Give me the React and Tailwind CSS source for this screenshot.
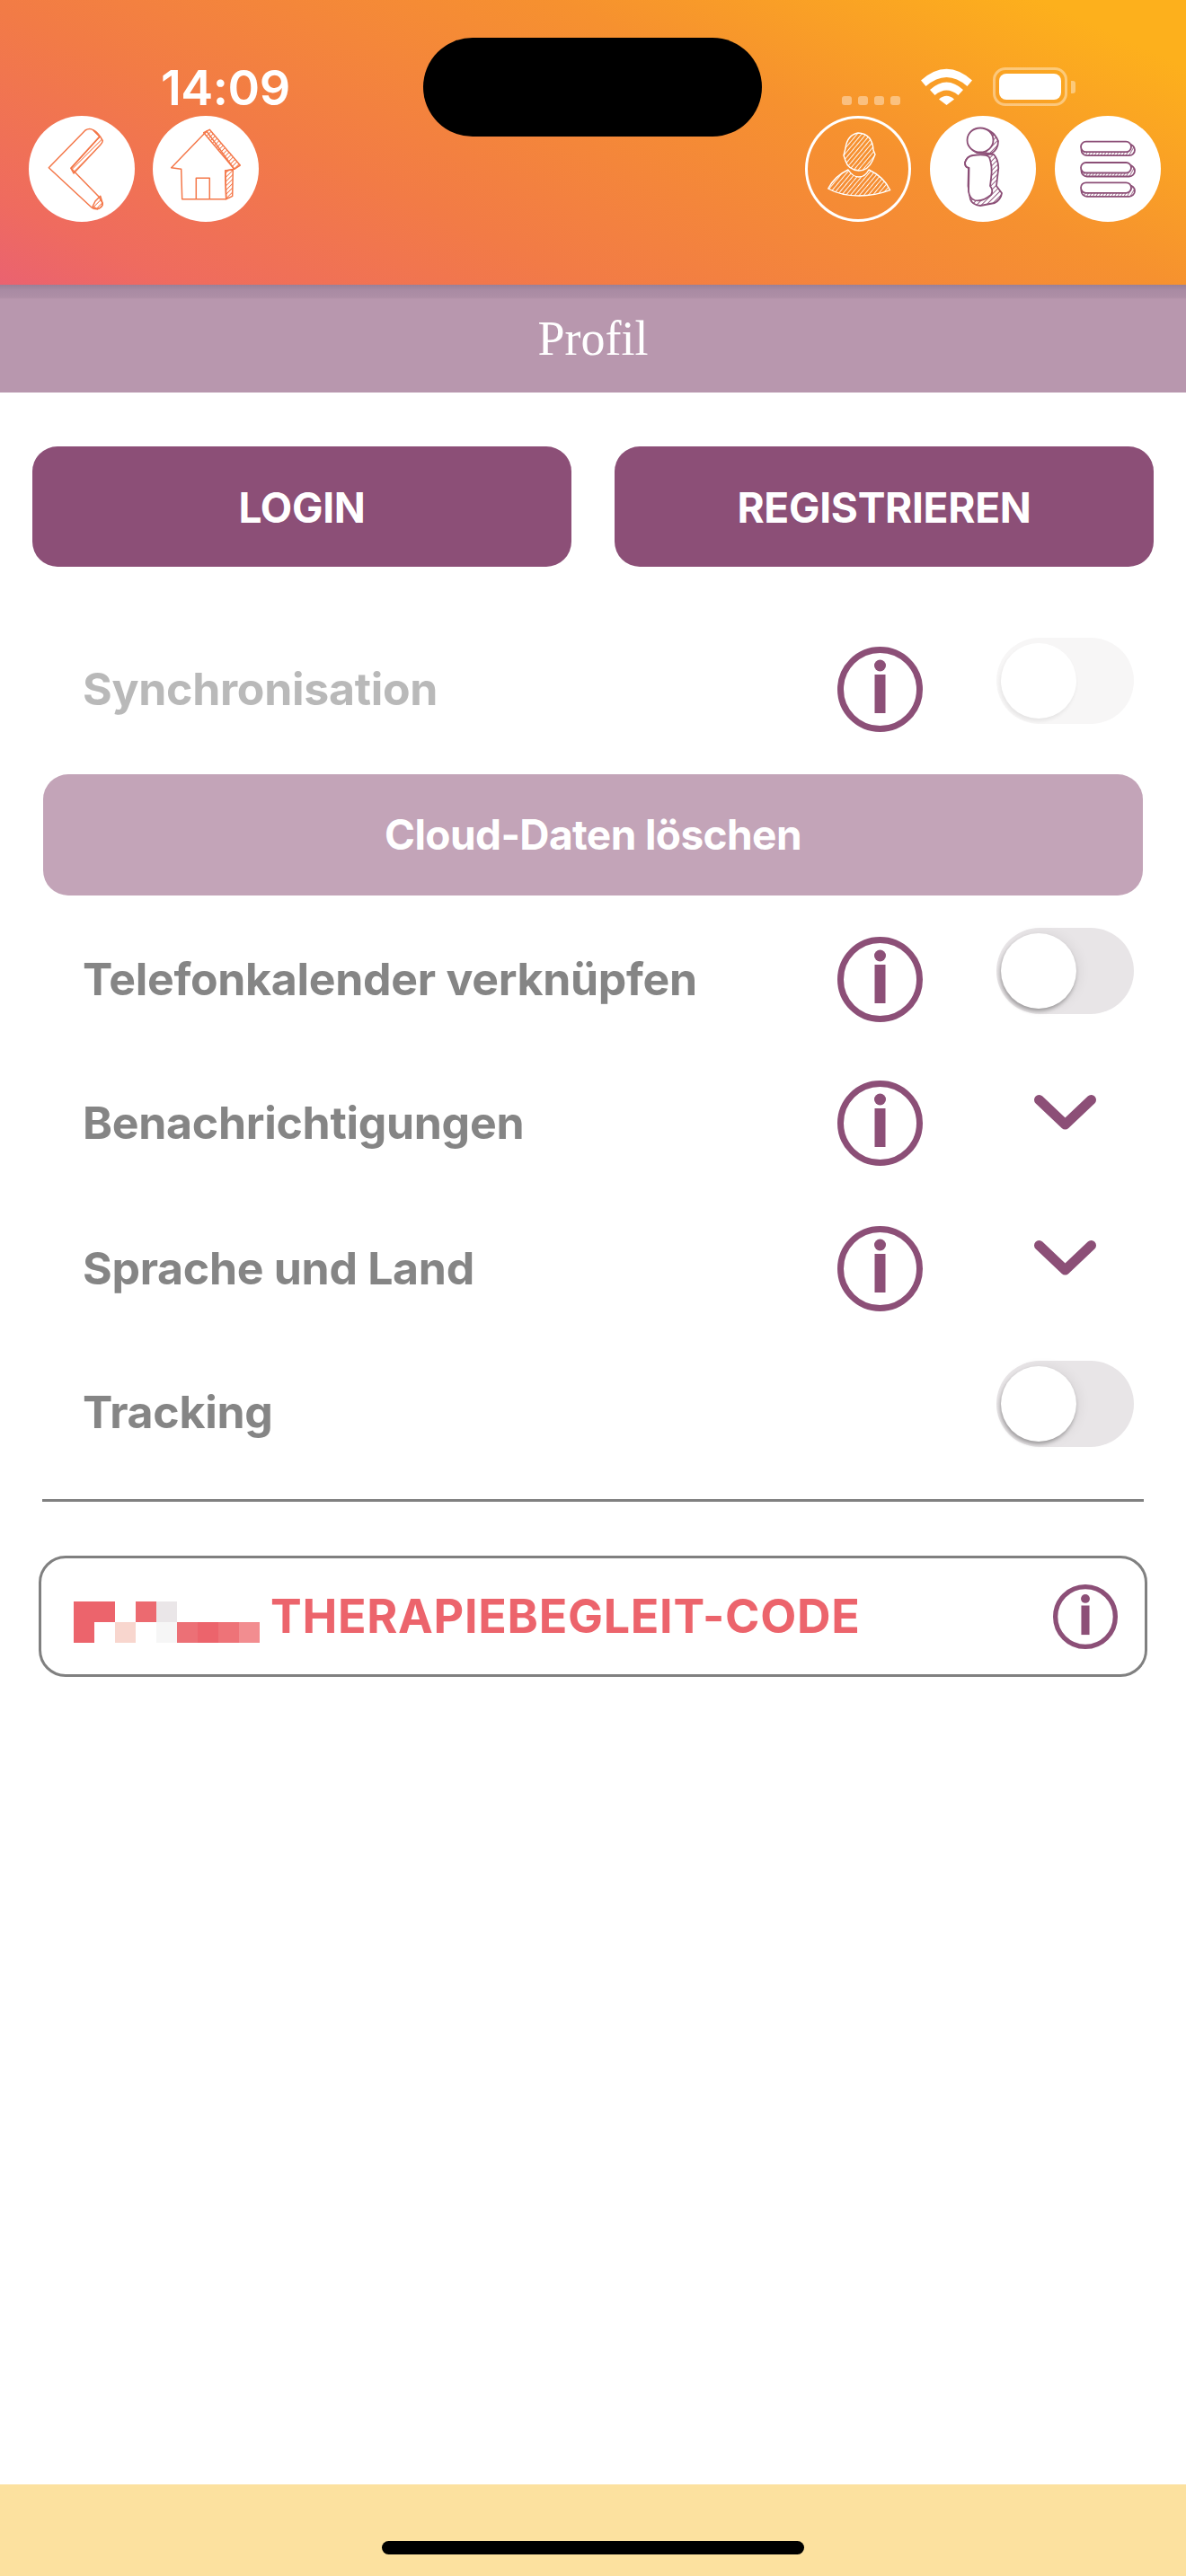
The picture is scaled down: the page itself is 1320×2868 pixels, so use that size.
const purple = '#8c4f77';

function Hatch({ id, color, gap = 5, width = 1.6, angle = 45 }) {
  return (
    <pattern id={id} width={gap} height={gap} patternUnits="userSpaceOnUse" patternTransform={`rotate(${angle})`}>
      <line x1="0" y1="0" x2="0" y2={gap} stroke={color} strokeWidth={width} />
    </pattern>
  );
}

function BackIcon() {
  const c = '#f4784a';
  return (
    <svg viewBox="0 0 118 118" className="w-full h-full" fill="none" stroke={c} strokeWidth="1.5" strokeLinejoin="round">
      <defs><Hatch id="h-back" color={c} gap={3.6} width={1.8} angle={45} /></defs>
      <path d="M22.3 57.7L63 16Q68 13 72 16L79 23L47 58.3L78 90L82.3 97.7Q82 102 76.3 103.7Q72 104 69.7 101.7Z" fill="#fff" />
      <path d="M72 16Q77 18 82.3 27.7Q82 30 80 32L50 64L47 58.3L79 23Z" fill="url(#h-back)" />
      <path d="M79.7 89.3L82.3 97.7Q82 102 76.3 103.7L71 101L74 95Z" fill="url(#h-back)" />
    </svg>
  );
}

function HomeIcon() {
  const c = '#f4784a';
  return (
    <svg viewBox="0 0 118 118" className="w-full h-full" fill="none" stroke={c} strokeWidth="1.5" strokeLinejoin="round">
      <defs><Hatch id="h-home" color={c} gap={3.4} width={1.8} angle={45} /></defs>
      <path d="M60 17L20.7 57.7L31.7 59.3L32.7 92.7L81.7 92.7L80.7 61L90.7 59.3Z" fill="#fff" />
      <path d="M56.7 18.7L63.3 15.3L97.3 55L90.7 59.3Z" fill="url(#h-home)" />
      <path d="M80.7 61L89.3 60L88.7 89.3L81.7 92.7Z" fill="url(#h-home)" />
      <path d="M48.3 92.7V69.3H63.3V92.7" />
    </svg>
  );
}

function PersonIcon() {
  return (
    <svg viewBox="0 0 118 118" className="w-full h-full" fill="url(#h-person)" stroke="#fff" strokeWidth="1.4" strokeLinejoin="round">
      <defs><Hatch id="h-person" color="#fff" gap={3.8} width={1.8} angle={40} /></defs>
      <path d="M59 19Q75 20 76 38L78 43L75 50Q70 61 60 61Q48 60 45 50L43 44L45 36Q47 21 59 19Z" />
      <path d="M25.7 81Q33 67 48 60Q53 68 60 68Q67 68 71 60Q88 68 94.7 82.7Q78 89 60 89Q40 89 25.7 81Z" />
    </svg>
  );
}

function InfoSketchIcon() {
  return (
    <svg viewBox="0 0 118 118" className="w-full h-full" fill="none" stroke={purple} strokeWidth="1.8" strokeLinejoin="round">
      <defs><Hatch id="h-info" color={purple} gap={3.8} width={1.8} angle={45} /></defs>
      <path d="M55 14Q70 14 76 28Q76 38 68 42L52 41Q42 36 42 27Q43 15 55 14Z" fill="url(#h-info)" />
      <ellipse cx="56" cy="27" rx="14.5" ry="13.5" fill="#fff" />
      <path d="M39 52Q41 45 48 44L70.7 42.7Q76 48 76.3 58L74 78L80 86Q79 93 72 97L56 100Q47 99 45 93L42.5 78L43 58Q39 57 39 52Z" fill="url(#h-info)" />
      <path d="M39 52Q41 45 48 44Q62 42 66 46Q70 56 68 70L67 78Q71 83 68 88Q58 96 50 94Q44 92 43 84L43.5 58Q39 57 39 52Z" fill="#fff" />
    </svg>
  );
}

function MenuIcon() {
  const bars = [28.7, 52, 74.3];
  return (
    <svg viewBox="0 0 118 118" className="w-full h-full" fill="none" stroke={purple} strokeWidth="1.8">
      <defs><Hatch id="h-menu" color={purple} gap={3} width={1.6} angle={30} /></defs>
      {bars.map((y) => (
        <g key={y}>
          <rect x="29.5" y={y + 3} width="59.5" height="12.5" rx="6.2" fill="url(#h-menu)" />
          <rect x="29" y={y} width="56" height="11.5" rx="5.7" fill="#fff" />
        </g>
      ))}
    </svg>
  );
}

function RoundButton({ children, outlined }) {
  return (
    <div className={outlined ? 'w-[118px] h-[118px] rounded-full ring-[3px] ring-inset ring-white' : 'w-[118px] h-[118px] rounded-full bg-white'}>
      {children}
    </div>
  );
}

function InfoIcon({ size = 95 }) {
  return (
    <svg width={size} height={size} viewBox="0 0 95 95" className="shrink-0">
      <circle cx="47.5" cy="47.5" r="44" fill="none" stroke={purple} strokeWidth="7" />
      <circle cx="47.5" cy="21" r="6.5" fill={purple} />
      <rect x="41.5" y="31" width="12" height="43" fill={purple} />
    </svg>
  );
}

function Toggle({ faded }) {
  return (
    <div className={faded ? 'w-[153px] h-[96px] -translate-y-[9px] rounded-full bg-[#f7f6f6] shrink-0 flex items-center pl-[5px]' : 'w-[153px] h-[96px] -translate-y-[9px] rounded-full bg-[#e8e5e7] shrink-0 flex items-center pl-[5px]'}>
      <div className={faded
        ? 'w-[84px] h-[84px] rounded-full bg-white shadow-[-1px_3px_4px_rgba(0,0,0,0.07)]'
        : 'w-[84px] h-[84px] rounded-full bg-white shadow-[-1px_3px_4px_rgba(0,0,0,0.3),4px_0_14px_rgba(0,0,0,0.06)]'} />
    </div>
  );
}

function Chevron() {
  return (
    <svg width="69" height="39" viewBox="0 0 69 39" fill="none" stroke={purple} strokeWidth="11" strokeLinecap="round" strokeLinejoin="round" className="-translate-y-[12px]">
      <path d="M5.5 5.5L34.5 33L63.5 5.5" />
    </svg>
  );
}

function Row({ label, faded, info = true, children, className }) {
  return (
    <div className={`flex items-center pl-[92px] ${className}`}>
      <span className={faded ? 'flex-1 text-[50px] font-bold text-[#b9b9b9] tracking-[-0.3px]' : 'flex-1 text-[50px] font-bold text-[#858585] tracking-[-0.3px]'}>{label}</span>
      {info && <InfoIcon />}
      <div className="w-[153px] ml-[82px] mr-[58px] flex justify-center">{children}</div>
    </div>
  );
}

const pixels = [
  '#ec646c', '#ec646c', '#ffffff', '#ec6a70', '#eae6e8', '#ffffff', '#ffffff', '#ffffff', '#ffffff',
  '#ec646c', '#ffffff', '#f8d6ce', '#ffffff', '#f6f6f6', '#ec7076', '#ec646c', '#ee7378', '#f28d90',
];

export default function App() {
  return (
    <div className="min-h-[2868px] flex flex-col bg-white font-['Inter',sans-serif]">
      <div className="relative h-[317px] pl-[32px] pr-[28px] pt-[129px] flex justify-between bg-[linear-gradient(25deg,#ea6270_0%,#ef6b5f_10%,#f27b46_33%,#f6912f_65%,#fdb01c_92%)]">
        <span className="absolute left-[179px] top-[66px] text-[54px] leading-[64px] font-semibold text-white tracking-[-0.5px]">14:09</span>
        <div className="absolute left-[471px] top-[42px] w-[377px] h-[110px] rounded-full bg-black" />
        <div className="absolute left-[937px] top-[107px] flex gap-[7px]">
          <div className="w-[11px] h-[10px] rounded-[3px] bg-white/40" />
          <div className="w-[11px] h-[10px] rounded-[3px] bg-white/40" />
          <div className="w-[11px] h-[10px] rounded-[3px] bg-white/40" />
          <div className="w-[11px] h-[10px] rounded-[3px] bg-white/40" />
        </div>
        <svg className="absolute left-[1025px] top-[76px]" width="57" height="41" viewBox="0 0 57 41" fill="#fff">
          <path d="M0 13.5Q28.5 -12 57 13.5L51.5 20Q28.5 0 5.5 20Z" />
          <path d="M10 24Q28.5 7 47 24L41.5 30Q28.5 19 15.5 30Z" />
          <path d="M20 34.5Q28.5 27 37 34.5L28.5 41Z" />
        </svg>
        <div className="absolute left-[1105px] top-[75px] w-[83px] h-[43px] rounded-[14px] border-[3px] border-white/40 p-[4px]">
          <div className="w-full h-full rounded-[8px] bg-white" />
        </div>
        <div className="absolute left-[1192px] top-[90px] w-[5px] h-[14px] rounded-r-[3px] bg-white/40" />

        <div className="flex gap-[20px]">
          <RoundButton><BackIcon /></RoundButton>
          <RoundButton><HomeIcon /></RoundButton>
        </div>
        <div className="flex gap-[21px]">
          <RoundButton outlined><PersonIcon /></RoundButton>
          <RoundButton><InfoSketchIcon /></RoundButton>
          <RoundButton><MenuIcon /></RoundButton>
        </div>
      </div>

      <div className="h-[120px] flex items-center justify-center bg-[linear-gradient(to_bottom,#9a8097_0,#a98ba3_6px,#ae8fa6_14px,#b897ae_16px)]">
        <span className="text-[54px] text-white font-['Liberation_Serif',serif]">Profil</span>
      </div>

      <div className="flex flex-col flex-1">
        <div className="flex gap-[48px] px-[36px] pt-[60px]">
          <div className="flex-1 h-[134px] pt-[2px] rounded-[28px] bg-[#8c4f77] flex items-center justify-center text-white font-bold text-[46px] tracking-[-0.3px]">LOGIN</div>
          <div className="flex-1 h-[134px] pt-[2px] rounded-[28px] bg-[#8c4f77] flex items-center justify-center text-white font-bold text-[46px] tracking-[-0.3px]">REGISTRIEREN</div>
        </div>

        <Row label="Synchronisation" faded className="h-[96px] mt-[88px]"><Toggle faded /></Row>

        <div className="mx-[48px] mt-[47px] h-[135px] rounded-[28px] bg-[#c3a4b8] flex items-center justify-center text-white font-bold text-[46px] tracking-[-0.6px]">Cloud-Daten löschen</div>

        <Row label="Telefonkalender verknüpfen" className="h-[96px] mt-[45px]"><Toggle /></Row>
        <Row label="Benachrichtigungen" className="h-[96px] mt-[64px]"><Chevron /></Row>
        <Row label="Sprache und Land" className="h-[96px] mt-[66px]"><Chevron /></Row>
        <Row label="Tracking" info={false} className="h-[96px] mt-[64px]"><Toggle /></Row>

        <div className="mx-[47px] mt-[49px] h-[3px] bg-[#808080]" />

        <div className="mx-[43px] mt-[60px] h-[135px] rounded-[30px] border-[3px] border-[#808080] flex items-center pl-[36px] pr-[30px]">
          <div className="grid grid-cols-[repeat(9,23px)] grid-rows-[repeat(2,23px)] shrink-0 mt-[13px]">
            {pixels.map((color, i) => (
              <div key={i} style={{ backgroundColor: color }} />
            ))}
          </div>
          <span className="flex-1 ml-[12px] text-[52px] font-bold text-[#ec646c] tracking-[0.7px]">THERAPIEBEGLEIT-CODE</span>
          <InfoIcon size={72} />
        </div>
      </div>

      <div className="h-[102px] bg-[#fce19f] flex justify-center pt-[63px]">
        <div className="w-[470px] h-[15px] rounded-full bg-black" />
      </div>
    </div>
  );
}
